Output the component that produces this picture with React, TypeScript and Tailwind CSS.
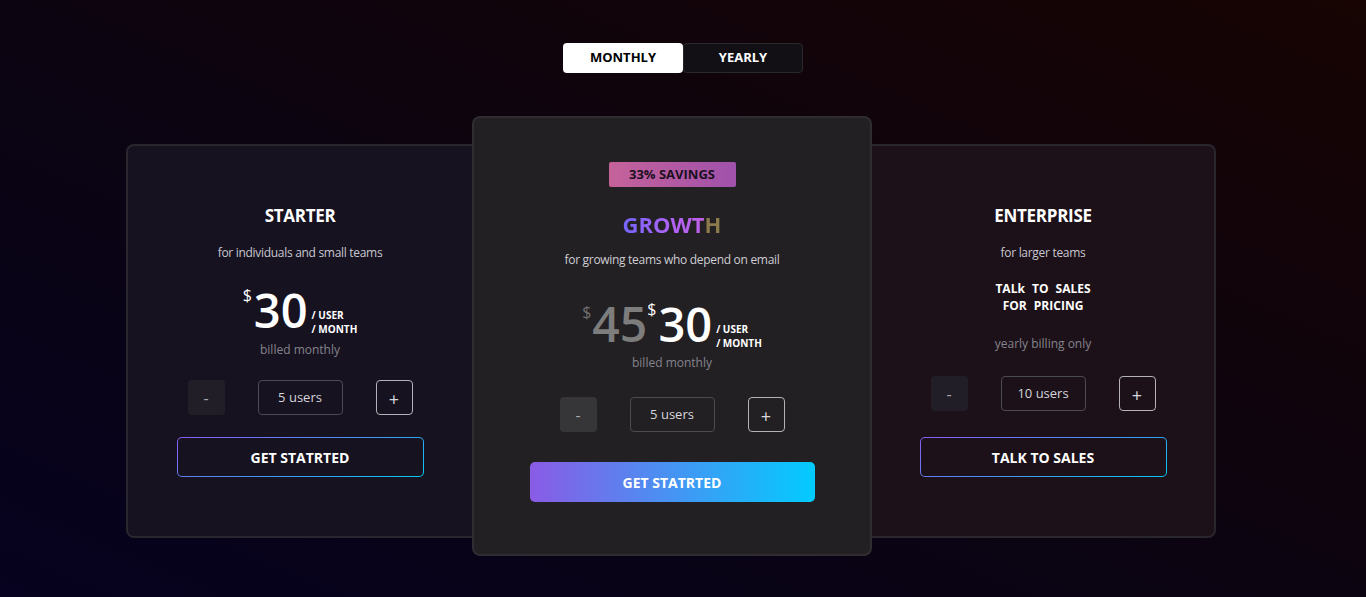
import { useState } from "react";

type Plan = {
  name: string;
  blurb: string;
  users: number;
};

const Counter = ({ users, featured }: { users: number; featured?: boolean }) => (
  <div className="flex items-center justify-center gap-[33px]">
    <button
      className={`w-[37px] h-[35px] rounded-[4px] text-[16px] text-[#a9a9b0] ${
        featured ? "bg-[#363538]" : "bg-[#221e28]"
      }`}
    >
      -
    </button>
    <div className="w-[85px] h-[35px] rounded-[4px] border border-[#4c4a52] flex items-center justify-center text-[13px] text-[#d6d6dc]">
      {users} users
    </div>
    <button className="w-[37px] h-[35px] rounded-[4px] border border-[#b4b2b8] text-[18px] leading-none text-[#d6d6dc] pt-[3px]">
      +
    </button>
  </div>
);

const OutlineButton = ({ label, bg }: { label: string; bg: string }) => (
  <div className="w-[247px] h-[40px] rounded-[5px] p-px bg-[linear-gradient(160deg,#8b5cf6,#06c8f4)]">
    <button className={`w-full h-full rounded-[4px] text-white text-[14px] font-bold ${bg}`}>
      {label}
    </button>
  </div>
);

const Price = ({ amount }: { amount: string }) => (
  <div className="flex items-start">
    <span className="text-[16px] text-white mt-[1px] mr-[2px] leading-none">$</span>
    <span className="text-[47px] leading-[48px] text-white font-semibold">{amount}</span>
    <div className="flex flex-col text-[10px] font-bold text-white leading-[14px] ml-[4px] mt-[22px]">
      <span>/ USER</span>
      <span>/ MONTH</span>
    </div>
  </div>
);

export default function App() {
  const [period, setPeriod] = useState("monthly");

  const starter: Plan = { name: "STARTER", blurb: "for individuals and small teams", users: 5 };

  return (
    <div
      className="w-full h-[597px] overflow-hidden bg-[linear-gradient(to_top_right,#06021f,#0c0410_50%,#170403)]"
      style={{ fontFamily: "'Open Sans', 'Noto Sans', sans-serif" }}
    >
      {/* billing toggle */}
      <div className="flex justify-center pt-[43px]">
        <div className="flex">
          <button
            onClick={() => setPeriod("monthly")}
            className={`w-[120px] h-[30px] rounded-[4px] text-[13px] font-bold ${
              period === "monthly" ? "bg-white text-black" : "bg-[#121015] text-white border border-[#2a282d]"
            }`}
          >
            MONTHLY
          </button>
          <button
            onClick={() => setPeriod("yearly")}
            className={`w-[120px] h-[30px] rounded-[4px] text-[13px] font-bold ${
              period === "yearly" ? "bg-white text-black" : "bg-[#121015] text-white border border-[#2a282d]"
            }`}
          >
            YEARLY
          </button>
        </div>
      </div>

      {/* plans */}
      <div className="flex justify-center items-start pr-[24px] mt-[43px]">
        {/* starter */}
        <div className="mt-[28px] w-[346px] h-[394px] rounded-l-[8px] border-2 border-r-0 border-[#29262d] bg-[#16121f] flex flex-col items-center pt-[58px]">
          <h2 className="text-[17px] font-bold text-white leading-[24px] tracking-[-0.3px]">{starter.name}</h2>
          <p className="text-[12px] text-[#c9c7d1] mt-[16px] tracking-[-0.3px]">{starter.blurb}</p>
          <div className="mt-[24px]">
            <Price amount="30" />
          </div>
          <p className="text-[12px] text-[#85838d] mt-[5px]">billed monthly</p>
          <div className="mt-[21px]">
            <Counter users={starter.users} />
          </div>
          <div className="mt-[22px]">
            <OutlineButton label="GET STATRTED" bg="bg-[#16121f]" />
          </div>
        </div>

        {/* growth */}
        <div className="relative z-10 w-[400px] h-[440px] rounded-[8px] border-2 border-[#2f2d31] bg-[#222023] flex flex-col items-center pt-[44px]">
          <div className="w-[127px] h-[25px] rounded-[2px] bg-[linear-gradient(to_right,#c5629a,#a051ab)] flex items-center justify-center text-[13px] font-bold text-[#1a1020]">
            33% SAVINGS
          </div>
          <h2 className="mt-[22px] text-[22px] font-bold leading-[30px] bg-[linear-gradient(to_right,#7565ff,#b562f5_55%,#c060e8_82%,#8c7b4a_83%)] bg-clip-text text-transparent">
            GROWTH
          </h2>
          <p className="text-[12px] text-[#cfcdd4] mt-[12px] tracking-[-0.3px]">for growing teams who depend on email</p>
          <div className="flex items-start mt-[31px]">
            <span className="text-[16px] text-[#707070] mt-[4px] mr-[1px] leading-none">$</span>
            <span className="text-[48px] leading-[48px] text-[#7d7d7d] font-semibold">45</span>
            <Price amount="30" />
          </div>
          <p className="text-[12px] text-[#85838d] mt-[4px]">billed monthly</p>
          <div className="mt-[25px]">
            <Counter users={5} featured />
          </div>
          <button className="mt-[30px] w-[285px] h-[40px] rounded-[5px] bg-[linear-gradient(to_right,#8a5be6,#02ccff)] text-white text-[14px] font-bold">
            GET STATRTED
          </button>
        </div>

        {/* enterprise */}
        <div className="mt-[28px] w-[344px] h-[394px] rounded-r-[8px] border-2 border-l-0 border-[#29262d] bg-[#1c1118] flex flex-col items-center pt-[58px]">
          <h2 className="text-[17px] font-bold text-white leading-[24px] tracking-[-0.3px]">ENTERPRISE</h2>
          <p className="text-[12px] text-[#c9c7d1] mt-[16px] tracking-[-0.3px]">for larger teams</p>
          <div className="mt-[18px] text-[12px] font-bold text-white text-center leading-[17px] [word-spacing:4px]">
            <div>TALk TO SALES</div>
            <div>FOR PRICING</div>
          </div>
          <p className="text-[12px] text-[#85838d] mt-[21px]">yearly billing only</p>
          <div className="mt-[23px]">
            <Counter users={10} />
          </div>
          <div className="mt-[26px]">
            <OutlineButton label="TALK TO SALES" bg="bg-[#1c1118]" />
          </div>
        </div>
      </div>
    </div>
  );
}
